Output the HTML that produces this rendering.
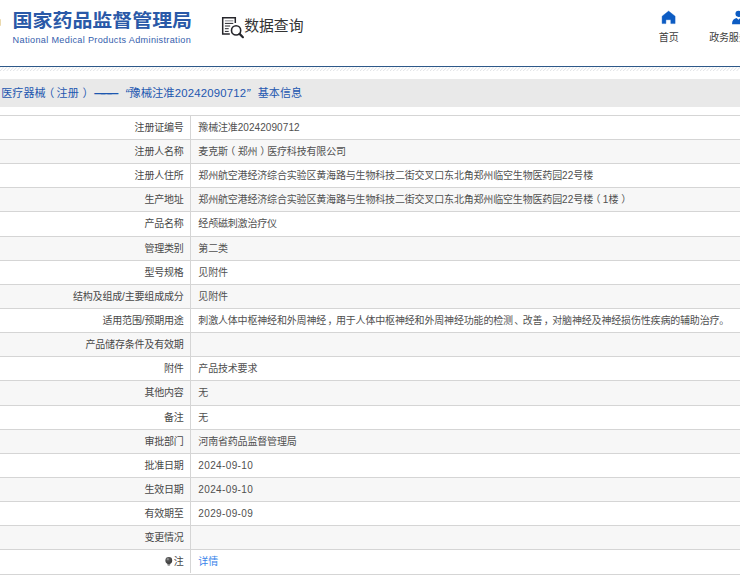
<!DOCTYPE html>
<html lang="zh-CN"><head><meta charset="utf-8"><title>数据查询</title>
<style>
html,body{margin:0;padding:0;background:#fff;}
body{width:740px;height:583px;position:relative;overflow:hidden;font-family:"Liberation Sans","Noto Sans CJK SC",sans-serif;color:#333;}
.abs{position:absolute;white-space:nowrap;}
.logo-cn{left:12.6px;top:5.8px;font-size:19.95px;font-weight:bold;color:#2a59a8;line-height:28px;letter-spacing:0px;transform:scaleY(0.935);transform-origin:0 22.6px;}
.logo-en{left:12.6px;top:33.7px;font-size:9.1px;color:#3560ad;line-height:12px;letter-spacing:0.33px;}
.title{left:244.2px;top:14.6px;font-size:14.85px;line-height:22px;color:#333;}
.nav{letter-spacing:-0.17px;font-size:10px;line-height:12px;color:#3c3c3c;top:31.9px;}
.hline{left:0;top:66px;width:740px;height:1px;background:#2d5889;}
.hatch{left:0;top:67px;}
.bar{left:0;top:79px;width:740px;height:28px;background:#e9e9e9;}
.bartxt{top:80.4px;line-height:27.6px;font-size:11.05px;color:#1d57b0;}
.row{position:absolute;left:0;width:740px;height:24.14px;border-top:1px solid #d5d5d5;box-sizing:border-box;background:#fff;font-size:10px;letter-spacing:-0.17px;line-height:23.74px;white-space:nowrap;}
.row.odd{background:#f7f7f7;}
.k{position:absolute;left:0;top:0;width:191px;height:100%;box-sizing:border-box;border-right:1px solid #d5d5d5;text-align:right;padding-right:6.3px;color:#484848;}
.v{position:absolute;left:198.3px;top:0;color:#505050;}
.lnk{color:#3a84ea;}
.d{letter-spacing:0.08px;}
.pl{position:relative;left:-2.6px;}
.pc{position:relative;left:1.4px;}
.pr{position:relative;left:2.9px;}
.dt{letter-spacing:0.37px;}
.bulb{display:inline-block;vertical-align:-1.6px;margin-right:0.9px;line-height:0;}
.bot{left:0;top:573.51px;width:740px;height:1px;background:#d5d5d5;}
</style></head><body>
<div class="abs" style="left:0;top:18.6px;width:1.3px;height:7px;background:#ead9ae;border-radius:0 1px 1px 0"></div>
<div class="abs logo-cn">国家药品监督管理局</div>
<div class="abs logo-en">National Medical Products Administration</div>
<svg class="abs" style="left:218px;top:12px" width="32" height="30" viewBox="0 0 32 30" fill="none" stroke="#26262b">
<path d="M17.3 11V5.75H4.7V21.9H11.8" stroke-width="1.5"/>
<path d="M6.9 8.85H15.3" stroke="#8a8a8e" stroke-width="1"/>
<path d="M6.9 11.4H15.3M6.9 14H12.2M6.9 16.7H10.7M6.9 19.4H10.7" stroke-width="1"/>
<circle cx="18.1" cy="18.4" r="4.6" stroke-width="1.6"/>
<path d="M21.6 21.9L24.9 25.2" stroke-width="2.2" stroke-linecap="round"/>
</svg>
<div class="abs title">数据查询</div>
<svg class="abs" style="left:655px;top:6.4px" width="30" height="24" viewBox="0 0 30 24"><path d="M13.6 5.1L7.1 10.2V17.6H10.9V13.7H15.8V17.6H20.1V10.2Z" fill="#0d5cc3" stroke="#0d5cc3" stroke-width="0.4" stroke-linejoin="round"/></svg>
<div class="abs nav" style="left:658.8px">首页</div>
<svg class="abs" style="left:716px;top:6.4px" width="40" height="24" viewBox="0 0 40 24"><circle cx="22.5" cy="7.85" r="3.05" fill="#0d5cc3"/><path d="M16.1 18.3V17Q16.3 12.8 20.6 11.9L22.5 13.8L24.4 11.9Q28.7 12.8 28.9 17V18.3Z" fill="#0d5cc3"/></svg>
<div class="abs nav" style="left:709.2px">政务服务</div>
<div class="abs hline"></div>
<svg class="abs hatch" width="740" height="4" viewBox="0 0 740 4"><defs><pattern id="ht" width="3.333" height="4" patternUnits="userSpaceOnUse"><path d="M-0.4 4.4L4.1 -0.4M-3.733 4.4L0.767 -0.4" stroke="#d3d6da" stroke-width="0.75"/></pattern></defs><rect width="740" height="4" fill="url(#ht)"/></svg>
<div class="abs bar"></div>
<div class="abs bartxt" style="left:1.3px">医疗器械</div>
<div class="abs bartxt" style="left:43.2px">（</div>
<div class="abs bartxt" style="left:56.6px">注册</div>
<div class="abs bartxt" style="left:82.4px">）</div>
<div class="abs bartxt" style="left:94.2px;letter-spacing:-4.5px;font-weight:bold">———</div>
<div class="abs bartxt" style="left:124.9px;font-size:12.5px;font-style:italic;top:80.9px">“</div>
<div class="abs bartxt" style="left:129.3px;font-size:11.35px">豫械注准<span style="letter-spacing:0.2px">20242090712</span></div>
<div class="abs bartxt" style="left:246px;font-size:12.5px;font-style:italic;top:80.9px">”</div>
<div class="abs bartxt" style="left:257.8px">基本信息</div>
<div class="row" style="top:114.85px"><div class="k">注册证编号</div><div class="v">豫械注准<span class="d">20242090712</span></div></div>
<div class="row odd" style="top:138.99px"><div class="k">注册人名称</div><div class="v">麦克斯<span class="pl">（</span>郑州<span class="pr">）</span>医疗科技有限公司</div></div>
<div class="row" style="top:163.13px"><div class="k">注册人住所</div><div class="v">郑州航空港经济综合实验区黄海路与生物科技二街交叉口东北角郑州临空生物医药园<span class="d">22</span>号楼</div></div>
<div class="row odd" style="top:187.27px"><div class="k">生产地址</div><div class="v">郑州航空港经济综合实验区黄海路与生物科技二街交叉口东北角郑州临空生物医药园<span class="d">22</span>号楼<span class="pl">（</span><span class="d">1</span>楼<span class="pr">）</span></div></div>
<div class="row" style="top:211.41px"><div class="k">产品名称</div><div class="v">经颅磁刺激治疗仪</div></div>
<div class="row odd" style="top:235.55px"><div class="k">管理类别</div><div class="v">第二类</div></div>
<div class="row" style="top:259.69px"><div class="k">型号规格</div><div class="v">见附件</div></div>
<div class="row odd" style="top:283.83px"><div class="k">结构及组成/主要组成成分</div><div class="v">见附件</div></div>
<div class="row" style="top:307.97px"><div class="k">适用范围/预期用途</div><div class="v">刺激人体中枢神经和外周神经<span class="pc">，</span>用于人体中枢神经和外周神经功能的检测<span class="pc">、</span>改善<span class="pc">，</span>对脑神经及神经损伤性疾病的辅助治疗。</div></div>
<div class="row odd" style="top:332.11px"><div class="k">产品储存条件及有效期</div><div class="v"></div></div>
<div class="row" style="top:356.25px"><div class="k">附件</div><div class="v">产品技术要求</div></div>
<div class="row odd" style="top:380.39px"><div class="k">其他内容</div><div class="v">无</div></div>
<div class="row" style="top:404.53px"><div class="k">备注</div><div class="v">无</div></div>
<div class="row odd" style="top:428.67px"><div class="k">审批部门</div><div class="v">河南省药品监督管理局</div></div>
<div class="row" style="top:452.81px"><div class="k">批准日期</div><div class="v"><span class="dt">2024-09-10</span></div></div>
<div class="row odd" style="top:476.95px"><div class="k">生效日期</div><div class="v"><span class="dt">2024-09-10</span></div></div>
<div class="row" style="top:501.09px"><div class="k">有效期至</div><div class="v"><span class="dt">2029-09-09</span></div></div>
<div class="row odd" style="top:525.23px"><div class="k">变更情况</div><div class="v"></div></div>
<div class="row" style="top:549.37px"><div class="k"><span class="bulb"><svg viewBox="0 0 8 10" width="7.6" height="9.5"><defs><radialGradient id="bg" cx="0.36" cy="0.3" r="0.7"><stop offset="0" stop-color="#a8a8a8"/><stop offset="0.35" stop-color="#555"/><stop offset="1" stop-color="#3c3c3c"/></radialGradient></defs><path d="M2.3 6.2H5.7L5.4 8.6Q4 9.9 2.6 8.6Z" fill="#8c8c8c"/><circle cx="4" cy="3.7" r="3.6" fill="url(#bg)"/></svg></span>注</div><div class="v"><span class="lnk">详情</span></div></div>
<div class="abs bot"></div>
</body></html>
